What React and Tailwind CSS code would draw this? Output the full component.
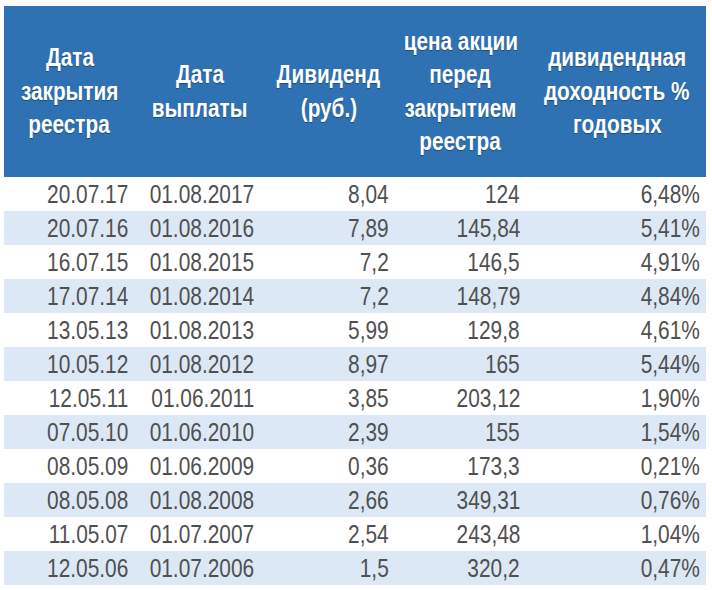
const headers = [
  ['Дата', 'закрытия', 'реестра'],
  ['Дата', 'выплаты'],
  ['Дивиденд', '(руб.)'],
  ['цена акции', 'перед', 'закрытием', 'реестра'],
  ['дивидендная', 'доходность %', 'годовых'],
];

const rows = [
  ['20.07.17', '01.08.2017', '8,04', '124', '6,48%'],
  ['20.07.16', '01.08.2016', '7,89', '145,84', '5,41%'],
  ['16.07.15', '01.08.2015', '7,2', '146,5', '4,91%'],
  ['17.07.14', '01.08.2014', '7,2', '148,79', '4,84%'],
  ['13.05.13', '01.08.2013', '5,99', '129,8', '4,61%'],
  ['10.05.12', '01.08.2012', '8,97', '165', '5,44%'],
  ['12.05.11', '01.06.2011', '3,85', '203,12', '1,90%'],
  ['07.05.10', '01.06.2010', '2,39', '155', '1,54%'],
  ['08.05.09', '01.06.2009', '0,36', '173,3', '0,21%'],
  ['08.05.08', '01.08.2008', '2,66', '349,31', '0,76%'],
  ['11.05.07', '01.07.2007', '2,54', '243,48', '1,04%'],
  ['12.05.06', '01.07.2006', '1,5', '320,2', '0,47%'],
];

const cellPad = ['pr-[7px]', 'pr-[11px]', 'pr-[3px]', 'pr-[8px]', 'pr-[6px]'];

export default function App() {
  return (
    <div className="h-[590px] w-[712px] bg-white pl-[4px] pt-[6px] font-['Liberation_Sans',Arial,sans-serif]">
      <table className="w-[702px] table-fixed border-collapse">
        <colgroup>
          <col className="w-[131px]" />
          <col className="w-[130px]" />
          <col className="w-[127px]" />
          <col className="w-[136px]" />
          <col className="w-[178px]" />
        </colgroup>
        <thead>
          <tr className="h-[171px] bg-[#2f72b4]">
            {headers.map((lines, i) => (
              <th
                key={i}
                className="p-0 text-center align-middle text-[25px] font-bold leading-[33.5px] whitespace-nowrap text-white [text-shadow:0_1px_1px_rgba(0,0,0,0.35)]"
              >
                {lines.map((line) => (
                  <div key={line}>
                    <span className="inline-block origin-center scale-x-[0.83]">{line}</span>
                  </div>
                ))}
              </th>
            ))}
          </tr>
        </thead>
        <tbody>
          {rows.map((row, r) => (
            <tr key={r} className={`h-[34px] ${r % 2 ? 'bg-[#dce8f5]' : 'bg-white'}`}>
              {row.map((value, c) => (
                <td
                  key={c}
                  className={`p-0 align-middle text-[25px] leading-[34px] whitespace-nowrap text-[#505050] ${cellPad[c]}`}
                >
                  <div className="flex justify-end">
                    <span className="shrink-0 origin-right scale-x-[0.835]">{value}</span>
                  </div>
                </td>
              ))}
            </tr>
          ))}
        </tbody>
      </table>
    </div>
  );
}
